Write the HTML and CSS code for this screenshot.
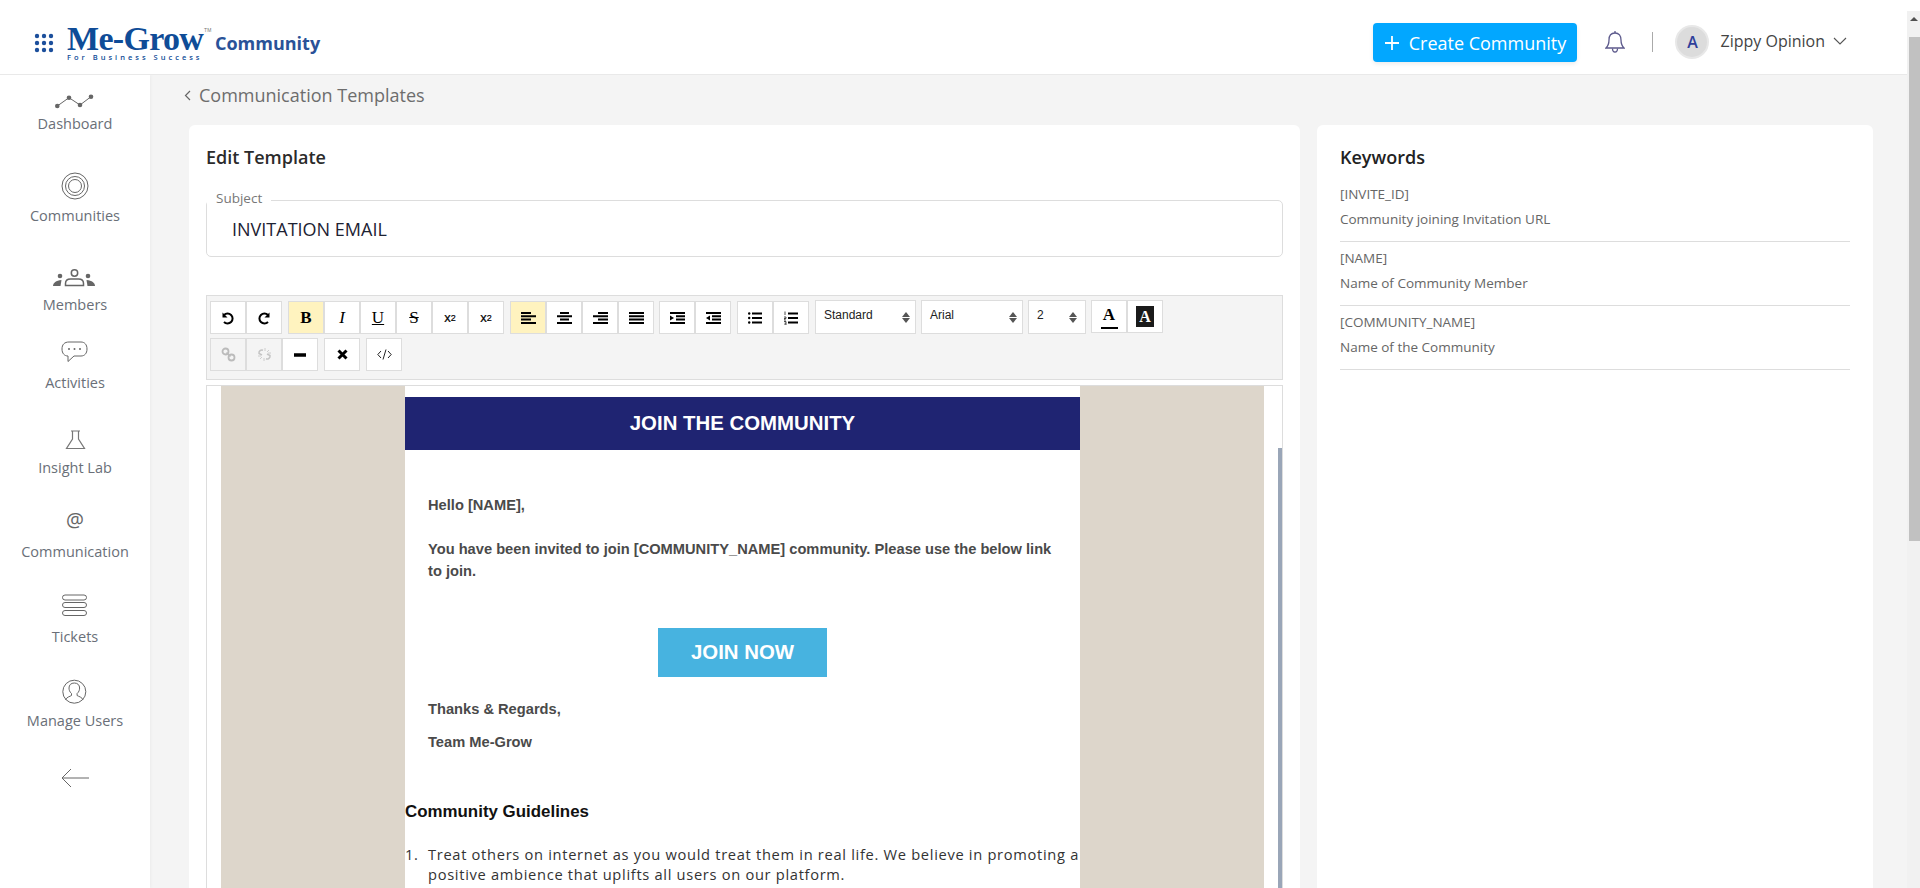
FILE: index.html
```html
<!DOCTYPE html>
<html lang="en">
<head>
<meta charset="utf-8">
<title>Communication Templates</title>
<link rel="stylesheet" href="styles.css">
</head>
<body>
<header class="topbar">
  <div class="brand">
    <svg class="apps" width="20" height="20" viewBox="0 0 20 20"><g fill="#1c4f9c"><circle cx="3" cy="3" r="2.2"/><circle cx="10" cy="3" r="2.2"/><circle cx="17" cy="3" r="2.2"/><circle cx="3" cy="10" r="2.2"/><circle cx="10" cy="10" r="2.2"/><circle cx="17" cy="10" r="2.2"/><circle cx="3" cy="17" r="2.2"/><circle cx="10" cy="17" r="2.2"/><circle cx="17" cy="17" r="2.2"/></g></svg>
    <div class="logo">
      <div class="logo-name">Me-Grow<sup class="tm">TM</sup></div>
      <div class="logo-tag">For Business Success</div>
    </div>
    <div class="brand-sub">Community</div>
  </div>
  <div class="top-actions">
    <button class="create"><svg width="14" height="14" viewBox="0 0 14 14"><path d="M7 0v14M0 7h14" stroke="#fff" stroke-width="1.8"/></svg>Create Community</button>
    <svg class="bell" width="20" height="24" viewBox="0 0 20 24" fill="none" stroke="#5d5a8c" stroke-width="1.3"><path d="M10 3c-4 0-6 3-6 7 0 4-1 6-3 8h18c-2-2-3-4-3-8 0-4-2-7-6-7z"/><path d="M10 1v2M7.5 18.500c0 2 1 3.500 2.500 3.500s2.500-1.500 2.500-3.500"/></svg>
    <span class="vsep"></span>
    <span class="avatar">A</span>
    <span class="username">Zippy Opinion</span>
    <svg class="chev" width="14" height="8" viewBox="0 0 14 8" fill="none" stroke="#555" stroke-width="1.100"><path d="M1 1l6 6 6-6"/></svg>
  </div>
</header>

<div class="body-row">
  <nav class="sidebar">
    <a class="nav-item"><svg class="nav-icon" viewBox="0 0 60 38" fill="none" stroke="#666"><path d="M12.300 30L24 21.700 35 29 46 20.700"/><g fill="#666" stroke="none"><circle cx="12.300" cy="30" r="2.300"/><circle cx="24" cy="21.700" r="2.300"/><circle cx="35" cy="29" r="2.300"/><circle cx="46" cy="20.700" r="2.300"/></g></svg>Dashboard</a>
    <a class="nav-item"><svg class="nav-icon" viewBox="0 0 60 38" fill="none" stroke="#666"><circle cx="30" cy="18" r="13"/><circle cx="30" cy="18" r="9.500"/><circle cx="30" cy="18" r="6.500"/></svg>Communities</a>
    <a class="nav-item"><svg class="nav-icon" viewBox="0 0 60 38" fill="none" stroke="#666"><circle cx="29.500" cy="16" r="3.200" stroke-width="1.500"/><path d="M20.500 28.500v-2c0-3 2-4.500 5-4.500h8c3 0 5 1.500 5 4.500v2z" stroke-width="1.500"/><g fill="#666" stroke="none"><circle cx="15" cy="19" r="2.300"/><circle cx="43" cy="19" r="2.300"/><path d="M8 29c0-3 3-5.500 8.500-6l-1 6z"/><path d="M50 29c0-3-3-5.500-8.500-6l1 6z"/></g></svg>Members</a>
    <a class="nav-item"><svg class="nav-icon" viewBox="0 0 60 38" fill="none" stroke="#666"><path d="M24 7h12c3.500 0 6 2.500 6 7s-2.500 7-6 7H29l-6 5.500V21c-3.500 0-6-2.500-6-7s2.500-7 7-7z"/><g fill="#666" stroke="none"><circle cx="24" cy="14" r="1"/><circle cx="29.500" cy="14" r="1"/><circle cx="35" cy="14" r="1"/></g></svg>Activities</a>
    <a class="nav-item"><svg class="nav-icon" viewBox="0 0 60 38" fill="none" stroke="#777" stroke-width="1.200"><path d="M26 11h9M27.500 11v8l-6 9.500h18l-6-9.500v-8"/></svg>Insight Lab</a>
    <a class="nav-item"><svg class="nav-icon" viewBox="0 0 60 38"><text x="30" y="23" text-anchor="middle" class="at">@</text></svg>Communication</a>
    <a class="nav-item"><svg class="nav-icon" viewBox="0 0 60 38" fill="none" stroke="#666"><rect x="17.500" y="6" width="24" height="5" rx="2.500"/><rect x="17.500" y="13.500" width="24" height="5" rx="2.500"/><rect x="17.500" y="21.500" width="24" height="5" rx="2.500"/></svg>Tickets</a>
    <a class="nav-item"><svg class="nav-icon" viewBox="0 0 60 38" fill="none" stroke="#666"><circle cx="29.300" cy="18.700" r="11.500"/><path d="M20.500 27c1-3 4.500-3.500 6-4.500v-2c-2-1.500-2.500-4-2.500-5.500 0-3 2-5 5.300-5s5.300 2 5.300 5c0 1.500-.5 4-2.500 5.500v2c1.500 1 5 1.500 6 4.500"/></svg>Manage Users</a>
    <a class="nav-back"><svg width="30" height="20" viewBox="0 0 30 20" fill="none" stroke="#666"><path d="M29 10H2M11 1l-9 9 9 9"/></svg></a>
  </nav>

  <main class="main">
    <div class="crumb"><svg width="7" height="11" viewBox="0 0 7 11" fill="none" stroke="#666" stroke-width="1.200"><path d="M6 1L1.500 5.500 6 10"/></svg>Communication Templates</div>
    <div class="cards">
      <section class="card editor-card">
        <h2 class="card-title">Edit Template</h2>
        <fieldset class="subject">
          <legend>Subject</legend>
          <div class="subject-value">INVITATION EMAIL</div>
        </fieldset>
        <div class="toolbar">
          <div class="tb-row">
            <div class="tb-group">
              <span class="btn"><svg width="16" height="16" viewBox="0 0 16 16" fill="none" stroke="#000" stroke-width="2"><path d="M4 5a5 5 0 1 1 0 7"/><path d="M2.500 2.500v5h5z" fill="#000" stroke="none"/></svg></span>
              <span class="btn"><svg class="flip" width="16" height="16" viewBox="0 0 16 16" fill="none" stroke="#000" stroke-width="2"><path d="M4 5a5 5 0 1 1 0 7"/><path d="M2.500 2.500v5h5z" fill="#000" stroke="none"/></svg></span>
            </div>
            <div class="tb-group">
              <span class="btn on serif"><b>B</b></span>
              <span class="btn serif"><i>I</i></span>
              <span class="btn serif"><u>U</u></span>
              <span class="btn serif"><s>S</s></span>
              <span class="btn sans">x<sub>2</sub></span>
              <span class="btn sans">x<sup>2</sup></span>
            </div>
            <div class="tb-group">
              <span class="btn on"><svg width="15" height="12" viewBox="0 0 15 12"><path d="M0 1h10M0 4.300h15M0 7.600h10M0 10.900h15" stroke="#000" stroke-width="2"/></svg></span>
              <span class="btn"><svg width="15" height="12" viewBox="0 0 15 12"><path d="M3 1h9M0 4.300h15M3 7.600h9M0 10.900h15" stroke="#000" stroke-width="2"/></svg></span>
              <span class="btn"><svg width="15" height="12" viewBox="0 0 15 12"><path d="M5 1h10M0 4.300h15M5 7.600h10M0 10.900h15" stroke="#000" stroke-width="2"/></svg></span>
              <span class="btn"><svg width="15" height="12" viewBox="0 0 15 12"><path d="M0 1h15M0 4.300h15M0 7.600h15M0 10.900h15" stroke="#000" stroke-width="2"/></svg></span>
            </div>
            <div class="tb-group tb-tuck">
              <span class="btn"><svg width="15" height="12" viewBox="0 0 15 12"><path d="M0 1h15M6 4.300h9M6 7.600h9M0 10.900h15" stroke="#000" stroke-width="2"/><path d="M0 3.500L4 6 0 8.500z" fill="#000"/></svg></span>
              <span class="btn"><svg width="15" height="12" viewBox="0 0 15 12"><path d="M0 1h15M6 4.300h9M6 7.600h9M0 10.900h15" stroke="#000" stroke-width="2"/><path d="M4 3.500L0 6l4 2.500z" fill="#000"/></svg></span>
            </div>
            <div class="tb-group">
              <span class="btn"><svg width="14" height="12" viewBox="0 0 14 12"><path d="M4 1.500h10M4 6h10M4 10.500h10" stroke="#000" stroke-width="2"/><circle cx="1.200" cy="1.500" r="1.200"/><circle cx="1.200" cy="6" r="1.200"/><circle cx="1.200" cy="10.500" r="1.200"/></svg></span>
              <span class="btn"><svg width="14" height="14" viewBox="0 0 14 14"><path d="M4 2.500h10M4 7h10M4 11.500h10" stroke="#000" stroke-width="2"/><path d="M1 .5v3.500M0 6h2v1.500H0V9h2M0 10.500h2v3.500H0M.5 12.200H2" stroke="#222" stroke-width=".8" fill="none"/></svg></span>
            </div>
            <div class="sel sel-a">Standard</div>
            <div class="sel sel-b tb-tuck">Arial</div>
            <div class="sel sel-c tb-tuck">2</div>
            <div class="tb-group tb-raise tb-tuck">
              <span class="btn color-fore">A</span>
              <span class="btn"><span class="color-back">A</span></span>
            </div>
          </div>
          <div class="tb-row">
            <div class="tb-group">
              <span class="btn off"><svg width="15" height="15" viewBox="0 0 15 15" fill="none" stroke="#bbb" stroke-width="1.800"><circle cx="4.500" cy="4.500" r="3"/><circle cx="10.500" cy="10.500" r="3"/><path d="M5.500 5.500l4 4" stroke-width="1.200"/></svg></span>
              <span class="btn off"><svg width="15" height="15" viewBox="0 0 15 15" fill="none" stroke="#c4c4c4" stroke-width="1.500"><path d="M6 3.200A3 3 0 0 0 2 6.500l3 1.500M9 11.800a3 3 0 0 0 4-3.300l-3-1.500"/><path d="M8 1v3M12 3l-2 2M14 6h-3M1 9h3M3 12l2-2M7 14v-3" stroke-width=".8"/></svg></span>
              <span class="btn"><svg width="12" height="4" viewBox="0 0 12 4"><rect width="12" height="3.500" y=".25"/></svg></span>
            </div>
            <div class="tb-group">
              <span class="btn"><svg width="11" height="11" viewBox="0 0 11 11"><path d="M1.500 1.500l8 8M9.500 1.500l-8 8" stroke="#000" stroke-width="3"/></svg></span>
            </div>
            <div class="tb-group">
              <span class="btn"><svg width="15" height="11" viewBox="0 0 15 11" fill="none" stroke="#222" stroke-width="1"><path d="M4 2L.8 5.500 4 9M11 2l3.200 3.500L11 9M9 .5l-3 10"/></svg></span>
            </div>
          </div>
        </div>
        <div class="frame">
          <div class="bg-band">
            <article class="email">
              <div class="email-head">JOIN THE COMMUNITY</div>
              <p class="email-p hello">Hello [NAME],</p>
              <p class="email-p invite">You have been invited to join [COMMUNITY_NAME] community. Please use the below link to join.</p>
              <div class="cta-wrap"><span class="cta">JOIN NOW</span></div>
              <p class="email-p thanks">Thanks &amp; Regards,</p>
              <p class="email-p team">Team Me-Grow</p>
              <h3 class="guide-title">Community Guidelines</h3>
              <ol class="guide-list">
                <li><span>Treat others on internet as you would treat them in real life. We believe in promoting a positive ambience that uplifts all users on our platform.</span></li>
              </ol>
            </article>
          </div>
          <span class="frame-scroll"></span>
        </div>
      </section>
      <aside class="card kw-card">
        <h2 class="card-title kw-title">Keywords</h2>
        <div class="kw"><div>[INVITE_ID]</div><div>Community joining Invitation URL</div></div>
        <div class="kw"><div>[NAME]</div><div>Name of Community Member</div></div>
        <div class="kw"><div>[COMMUNITY_NAME]</div><div>Name of the Community</div></div>
      </aside>
    </div>
  </main>
</div>
<div class="page-scroll"><span class="page-arrow"></span><span class="page-thumb"></span></div>
</body>
</html>
```
FILE: styles.css
```css
* { box-sizing: border-box; }
html, body { margin: 0; height: 888px; overflow: hidden; }
body { font-family: "Open Sans", "Liberation Sans", sans-serif; background: #f4f4f4; color: #444; position: relative; }

.topbar { height: 75px; background: #fff; border-bottom: 1px solid #e9e9e9; display: flex; justify-content: space-between; position: relative; z-index: 2; }
.brand { display: flex; align-items: flex-start; padding: 24px 0 0 34px; }
.apps { margin-top: 9px; }
.logo { margin: 1px 0 0 13px; width: 148px; color: #0f4c97; }
.logo-name { font: bold 34px/28px "Liberation Serif", serif; letter-spacing: -.7px; white-space: nowrap; }
.tm { font: 5px/5px "Liberation Sans", sans-serif; vertical-align: 18px; letter-spacing: 0; color: #777; margin-left: 1px; }
.logo-tag { font: 600 7.500px/8px "Open Sans", sans-serif; letter-spacing: 3px; white-space: nowrap; }
.brand-sub { font-size: 18px; font-weight: 700; color: #2a5298; line-height: 24px; margin-top: 7px; }
.top-actions { display: flex; align-items: center; padding-right: 73px; height: 74px; }
.create { height: 39px; width: 204px; margin-top: 11px; background: #02a7ff; border: 0; border-radius: 4px; color: #fff; font: 18px "Open Sans", sans-serif; display: flex; align-items: center; justify-content: center; gap: 10px; padding: 0; box-shadow: 0 2px 4px rgba(0,0,0,.08); }
.bell { margin: 10px 0 0 28px; }
.vsep { width: 1px; height: 20px; background: #aaa; margin: 10px 0 0 27px; }
.avatar { width: 34px; height: 34px; border-radius: 50%; background: #dcdcdc; border: 2px solid #e8e8e8; color: #2f3f9a; font-size: 16px; font-weight: 600; display: flex; align-items: center; justify-content: center; margin: 10px 0 0 22px; }
.username { font-size: 16px; color: #444; margin: 8px 0 0 11px; }
.chev { margin: 8px 0 0 8px; }

.body-row { display: flex; height: 813px; }
.sidebar { width: 150px; flex: none; background: #fff; box-shadow: 1px 0 3px rgba(0,0,0,.04); display: grid; grid-template-rows: 59px 92px 89px 78px 85px 84px 85px 84px 64px; justify-items: center; }
.nav-item { display: flex; flex-direction: column; align-items: center; justify-content: flex-end; font-size: 14.500px; line-height: 20px; color: #6a6f78; white-space: nowrap; }
.nav-icon { width: 60px; height: 38px; flex: none; display: block; }
.at { font: 20px "Open Sans", sans-serif; fill: #666; }
.nav-back { align-self: end; height: 27px; }
.nav-back svg { display: block; }

.main { flex: 1; min-width: 0; padding: 0 33px 0 39px; }
.crumb { height: 50px; display: flex; align-items: center; gap: 8px; font-size: 18px; color: #6d6d6d; padding-bottom: 10px; margin-left: -5px; }
.cards { display: grid; grid-template-columns: 1111px 556px; gap: 17px; }
.card { background: #fff; border-radius: 6px; height: 800px; }
.editor-card { padding: 0 0 0 17px; }
.card-title { margin: 0; font-size: 18px; font-weight: 600; color: #2b2b2b; line-height: 22px; padding-top: 21px; }
.subject { margin: 21px 0 0; padding: 0; border: 1px solid #ddd; border-radius: 5px; height: 68px; width: 1077px; }
.subject legend { font-size: 13.500px; color: #777; padding: 0 9px 4px; margin-left: 0; line-height: 18px; }
.subject-value { font-size: 18px; color: #1d2233; padding-left: 25px; line-height: 24px; margin-top: 6px; }
.toolbar { margin-top: 38px; width: 1077px; height: 85px; background: #f4f4f4; border: 1px solid #ddd; padding: 5px 3px 0; }
.tb-row { display: flex; gap: 6px; height: 33px; margin-bottom: 4px; align-items: flex-start; }
.tb-group { display: flex; }
.tb-tuck { margin-left: -1px; }
.tb-raise { margin-top: -1px; }
.btn { width: 36px; height: 33px; background: #fff; border: 1px solid #ddd; display: flex; align-items: center; justify-content: center; color: #000; }
.btn.on { background: #fff3bf; }
.btn.off { background: #f4f4f4; }
.flip { transform: scaleX(-1); }
.serif { font: 17px "Liberation Serif", serif; }
.sans { font: 13px "Liberation Sans", sans-serif; -webkit-text-stroke: .2px #000; }
.sans sub, .sans sup { font-size: 9px; line-height: 0; }
.sans sub { vertical-align: -4px; }
.sans sup { vertical-align: 4px; }
.sel { height: 34px; margin-top: -1px; background: #fff; border: 1px solid #ddd; font: 12px/27px "Liberation Sans", sans-serif; color: #222; padding: 1px 0 0 8px; position: relative; }
.sel::before, .sel::after { content: ""; position: absolute; right: 5px; border-left: 4px solid transparent; border-right: 4px solid transparent; }
.sel::before { top: 11px; border-bottom: 5px solid #555; }
.sel::after { top: 17px; border-top: 5px solid #555; }
.sel-a { width: 101px; }
.sel-b { width: 102px; }
.sel-c { width: 58px; }
.sel-c::before, .sel-c::after { right: 8px; }
.color-fore { font: bold 17px/22px "Liberation Serif", serif; height: 33px; flex-direction: column; }
.color-fore::after { content: ""; width: 17px; height: 2px; background: #000; margin-top: 1px; }
.color-back { width: 18px; height: 21px; background: #1a1a1a; color: #fff; font: bold 16px/21px "Liberation Serif", serif; text-align: center; }

.frame { width: 1077px; height: 520px; margin-top: 5px; border: 1px solid #ddd; border-bottom: 0; padding-left: 14px; background: #fff; position: relative; overflow: hidden; }
.bg-band { width: 1043px; height: 100%; background: #ddd6cb; }
.email { width: 675px; height: 100%; margin-left: 184px; background: #fff; padding-top: 11px; }
.email-head { height: 53px; background: #1f2472; color: #fff; font: bold 20.400px/53px "Liberation Sans", sans-serif; text-align: center; }
.email-p { margin: 0; font: bold 14.670px/22px "Liberation Sans", sans-serif; color: #4a4a4a; padding: 0 23px; }
.hello { margin-top: 44px; }
.invite { margin-top: 22px; }
.cta-wrap { display: flex; justify-content: center; margin-top: 46px; }
.cta { width: 169px; height: 49px; background: #47b3e0; color: #fff; font: bold 20.400px/49px "Liberation Sans", sans-serif; text-align: center; }
.thanks { margin-top: 21px; }
.team { margin-top: 11px; }
.guide-title { margin: 48px 0 0; font: bold 16.900px/22px "Liberation Sans", sans-serif; color: #111; }
.guide-list { margin: 21px 0 0; padding: 0; list-style: none; counter-reset: guide; font-size: 14.670px; line-height: 20px; letter-spacing: .69px; color: #333; }
.guide-list li { display: grid; grid-template-columns: 23px 1fr; counter-increment: guide; }
.guide-list li::before { content: counter(guide) "."; }
.frame-scroll { position: absolute; right: 0; top: 62px; width: 4px; height: 460px; background: #9aa6b8; }

.kw-card { padding: 0 23px; }
.kw-title { color: #222; }
.kw { border-bottom: 1px solid #ddd; height: 64px; font-size: 13.500px; line-height: 25px; color: #666; padding-top: 4px; }
.kw:first-of-type { margin-top: 10px; }

.page-scroll { position: absolute; top: 11px; right: 0; width: 13px; height: 877px; background: #f1f1f1; z-index: 3; }
.page-arrow { position: absolute; top: 6px; left: 3px; border-left: 4px solid transparent; border-right: 4px solid transparent; border-bottom: 4px solid #505050; }
.page-thumb { position: absolute; top: 26px; right: 0; width: 11px; height: 504px; background: #c1c1c1; }
```
